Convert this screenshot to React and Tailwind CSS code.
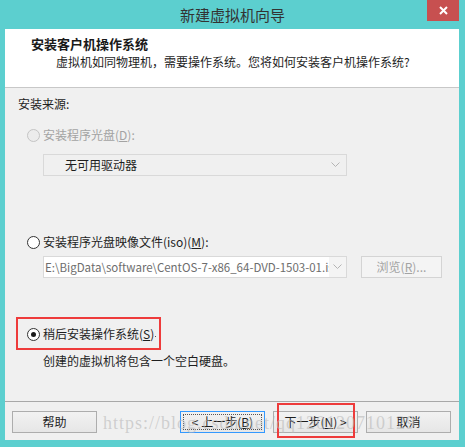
import React from 'react';

const Chevron = ({ className = '' }) => (
  <svg width="9" height="6" viewBox="0 0 9 6" className={className}>
    <path d="M0.5 0.5 L4.5 4.5 L8.5 0.5" fill="none" stroke="#b4b4b4" strokeWidth="1" />
  </svg>
);

const Radio = ({ checked, disabled }) => (
  <span
    className={`w-[13px] h-[13px] rounded-full border flex items-center justify-center shrink-0 ${
      disabled ? 'border-[#c4c4c4] bg-[#ececec]' : 'border-[#333333] bg-white'
    }`}
  >
    {checked && <span className="w-[5px] h-[5px] rounded-full bg-[#1a1a1a]"></span>}
  </span>
);

const Btn = ({ children, focused }) => (
  <div
    className={`w-[85px] h-[22px] flex items-center justify-center border bg-gradient-to-b from-[#f2f2f2] to-[#e6e6e6] text-[12px] text-[#1e1e1e] ${
      focused ? 'border-[#3399ff] p-[2px]' : 'border-[#adadad]'
    }`}
  >
    {focused ? (
      <div className="w-full h-full border border-dotted border-[#555] flex items-center justify-center">{children}</div>
    ) : (
      children
    )}
  </div>
);

export default function App() {
  return (
    <div className="w-[465px] h-[447px] bg-[#5ccfcf] relative overflow-hidden font-['Microsoft_YaHei','Noto_Sans_CJK_SC',sans-serif]">
      {/* Title bar */}
      <div className="h-[29px] relative flex items-center justify-center">
        <span className="text-[15px] text-[#333333] leading-none mt-[-1px]">新建虚拟机向导</span>
        <div className="absolute right-[6px] top-0 w-[32px] h-[21px] bg-[#c75050] flex items-center justify-center">
          <svg width="9" height="9" viewBox="0 0 9 9">
            <path d="M1 1 L8 8 M8 1 L1 8" stroke="#ffffff" strokeWidth="2" />
          </svg>
        </div>
      </div>

      {/* Client area */}
      <div className="ml-[5px] w-[454px] h-[411px] bg-[#f0f0f0] flex flex-col">
        {/* Header */}
        <div className="h-[59px] bg-white border-b border-[#c8c8c8] shrink-0">
          <div className="pl-[26px] pt-[6px] text-[13px] font-bold leading-[18px] text-[#1a1a1a]">安装客户机操作系统</div>
          <div className="pl-[51px] text-[12px] leading-[18px] text-[#1e1e1e]">
            虚拟机如同物理机，需要操作系统。您将如何安装客户机操作系统?
          </div>
        </div>

        {/* Body */}
        <div className="flex flex-col text-[12px] leading-[16px] text-[#1e1e1e]">
          <div className="mt-[8px] pl-[13px] h-[16px]">安装来源:</div>

          <div className="mt-[15px] pl-[22px] h-[16px] flex items-center gap-[3px] text-[#a3a3a3]">
            <Radio disabled />
            <span>
              安装程序光盘(<span className="underline">D</span>):
            </span>
          </div>

          <div className="mt-[11px] ml-[38px] w-[304px] h-[22px] border border-[#d9d9d9] bg-[#f0f0f0] flex items-center pl-[21px] pr-[6px]">
            <span className="flex-1 text-[#1e1e1e]">无可用驱动器</span>
            <Chevron />
          </div>

          <div className="mt-[58px] pl-[22px] h-[16px] flex items-center gap-[3px]">
            <Radio />
            <span>
              安装程序光盘映像文件(iso)(<span className="underline">M</span>):
            </span>
          </div>

          <div className="mt-[6px] ml-[38px] flex items-start gap-[14px]">
            <div className="w-[304px] h-[22px] border border-[#d9d9d9] bg-[#f4f4f4] flex items-stretch">
              <div className="w-[285px] bg-white flex items-center pl-[1px] overflow-hidden whitespace-nowrap text-[11.5px] text-[#6d6d6d]">
                E:\BigData\software\CentOS-7-x86_64-DVD-1503-01.iso
              </div>
              <div className="flex-1 flex items-center justify-center">
                <Chevron />
              </div>
            </div>
            <div className="w-[81px] h-[22px] border border-[#d4d4d4] bg-[#f4f4f4] flex items-center justify-center text-[#a3a3a3]">
              浏览(<span className="underline">R</span>)...
            </div>
          </div>

          <div className="mt-[48px] pl-[22px] h-[16px] flex items-center gap-[3px]">
            <Radio checked />
            <span>
              稍后安装操作系统(<span className="underline">S</span>)
            </span>
            <span className="w-[1px] h-[1px] bg-[#555] mt-[4px] ml-[-2px]"></span>
          </div>

          <div className="mt-[11px] pl-[38px] h-[16px]">创建的虚拟机将包含一个空白硬盘。</div>

          <div className="mt-[32px] border-t border-[#a8a8a8]"></div>

          <div className="mt-[9px] flex items-center pl-[7px]">
            <Btn>帮助</Btn>
            <div className="ml-[83px]">
              <Btn focused>
                &lt; 上一步(<span className="underline">B</span>)
              </Btn>
            </div>
            <div className="ml-[8px]">
              <Btn>
                下一步(<span className="underline">N</span>) &gt;
              </Btn>
            </div>
            <div className="ml-[8px]">
              <Btn>取消</Btn>
            </div>
          </div>
        </div>
      </div>

      {/* Annotations */}
      <div className="absolute left-[16px] top-[317px] w-[145px] h-[33px] border-2 border-[#ee3b3b]"></div>
      <div className="absolute left-[277px] top-[403px] w-[78px] h-[35px] border-2 border-[#ee3b3b]"></div>

      {/* Watermark */}
      <div className="absolute left-[103px] top-[412px] text-[18px] leading-[22px] tracking-[1px] text-[#b8b8b8]/60 font-['Liberation_Serif',serif] whitespace-nowrap pointer-events-none">
        https://blog.csdn.net/qq120120710129
      </div>
    </div>
  );
}
